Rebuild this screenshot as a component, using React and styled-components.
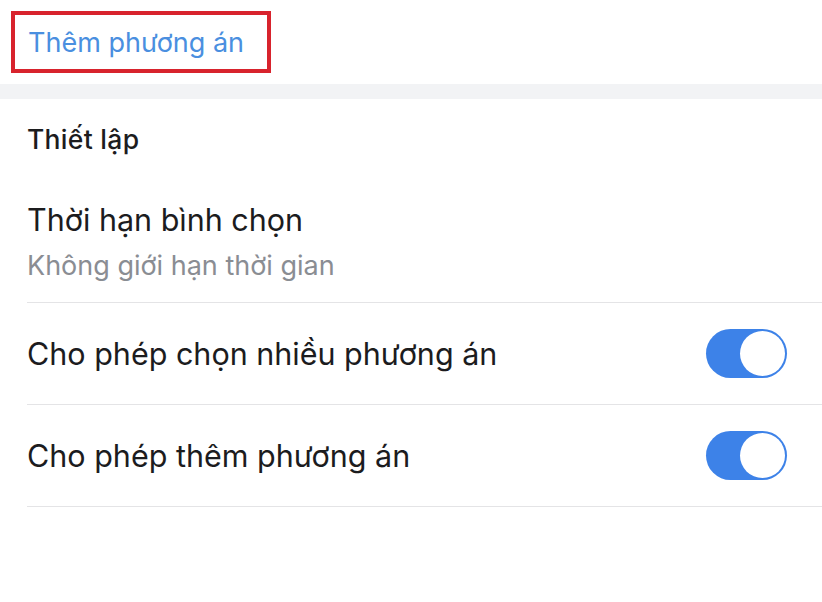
import React from "react";
import styled, { createGlobalStyle } from "styled-components";

const GlobalStyle = createGlobalStyle`
  html, body {
    margin: 0;
    padding: 0;
    background: #ffffff;
  }
  body {
    font-family: Inter, "Noto Sans", "Liberation Sans", sans-serif;
    -webkit-font-smoothing: antialiased;
  }
`;

const Page = styled.div`
  width: 822px;
  min-height: 602px;
  background: #ffffff;
`;

const AddBar = styled.div`
  padding: 11px 0 11px 11px;
`;

const HighlightBox = styled.div`
  box-sizing: border-box;
  width: 260px;
  height: 62px;
  border: 4px solid #d8232d;
  display: flex;
  align-items: center;
  padding-left: 13px;
`;

const AddLink = styled.span`
  font-size: 27px;
  color: #4a8fe0;
`;

const Gap = styled.div`
  height: 15px;
  background: #f2f3f5;
`;

const Settings = styled.section`
  padding-left: 27px;
`;

const SectionTitle = styled.h3`
  margin: 0;
  padding-top: 24px;
  font-size: 26.5px;
  font-weight: 500;
  line-height: 32px;
  letter-spacing: 0.3px;
  color: #1c1c1e;
`;

const Row = styled.div`
  display: flex;
  align-items: center;
  justify-content: space-between;
  box-sizing: border-box;
  height: 102px;
  padding-right: 35px;
  border-bottom: 1.5px solid #e4e4e6;
`;

const InfoRow = styled.div`
  display: flex;
  flex-direction: column;
  gap: 10px;
  padding: 46px 0 19px;
  border-bottom: 1.5px solid #e4e4e6;
`;

const RowLabel = styled.div`
  font-size: 30.5px;
  line-height: 38px;
  color: #1c1c1e;
`;

const RowHint = styled.div`
  font-size: 27px;
  line-height: 34px;
  color: #8a8d93;
`;

const Track = styled.div`
  position: relative;
  box-sizing: border-box;
  width: 81px;
  height: 49px;
  border-radius: 25px;
  background: ${(p) => (p.$on ? "#3d82e8" : "#e5e5ea")};
`;

const Knob = styled.div`
  position: absolute;
  top: 2px;
  left: ${(p) => (p.$on ? 34 : 2)}px;
  width: 45px;
  height: 45px;
  border-radius: 50%;
  background: #ffffff;
`;

function Toggle({ on }) {
  return (
    <Track $on={on}>
      <Knob $on={on} />
    </Track>
  );
}

export default function App() {
  return (
    <Page>
      <GlobalStyle />
      <AddBar>
        <HighlightBox>
          <AddLink>Thêm phương án</AddLink>
        </HighlightBox>
      </AddBar>
      <Gap />
      <Settings>
        <SectionTitle>Thiết lập</SectionTitle>
        <InfoRow>
          <RowLabel>Thời hạn bình chọn</RowLabel>
          <RowHint>Không giới hạn thời gian</RowHint>
        </InfoRow>
        <Row>
          <RowLabel>Cho phép chọn nhiều phương án</RowLabel>
          <Toggle on />
        </Row>
        <Row>
          <RowLabel>Cho phép thêm phương án</RowLabel>
          <Toggle on />
        </Row>
      </Settings>
    </Page>
  );
}
